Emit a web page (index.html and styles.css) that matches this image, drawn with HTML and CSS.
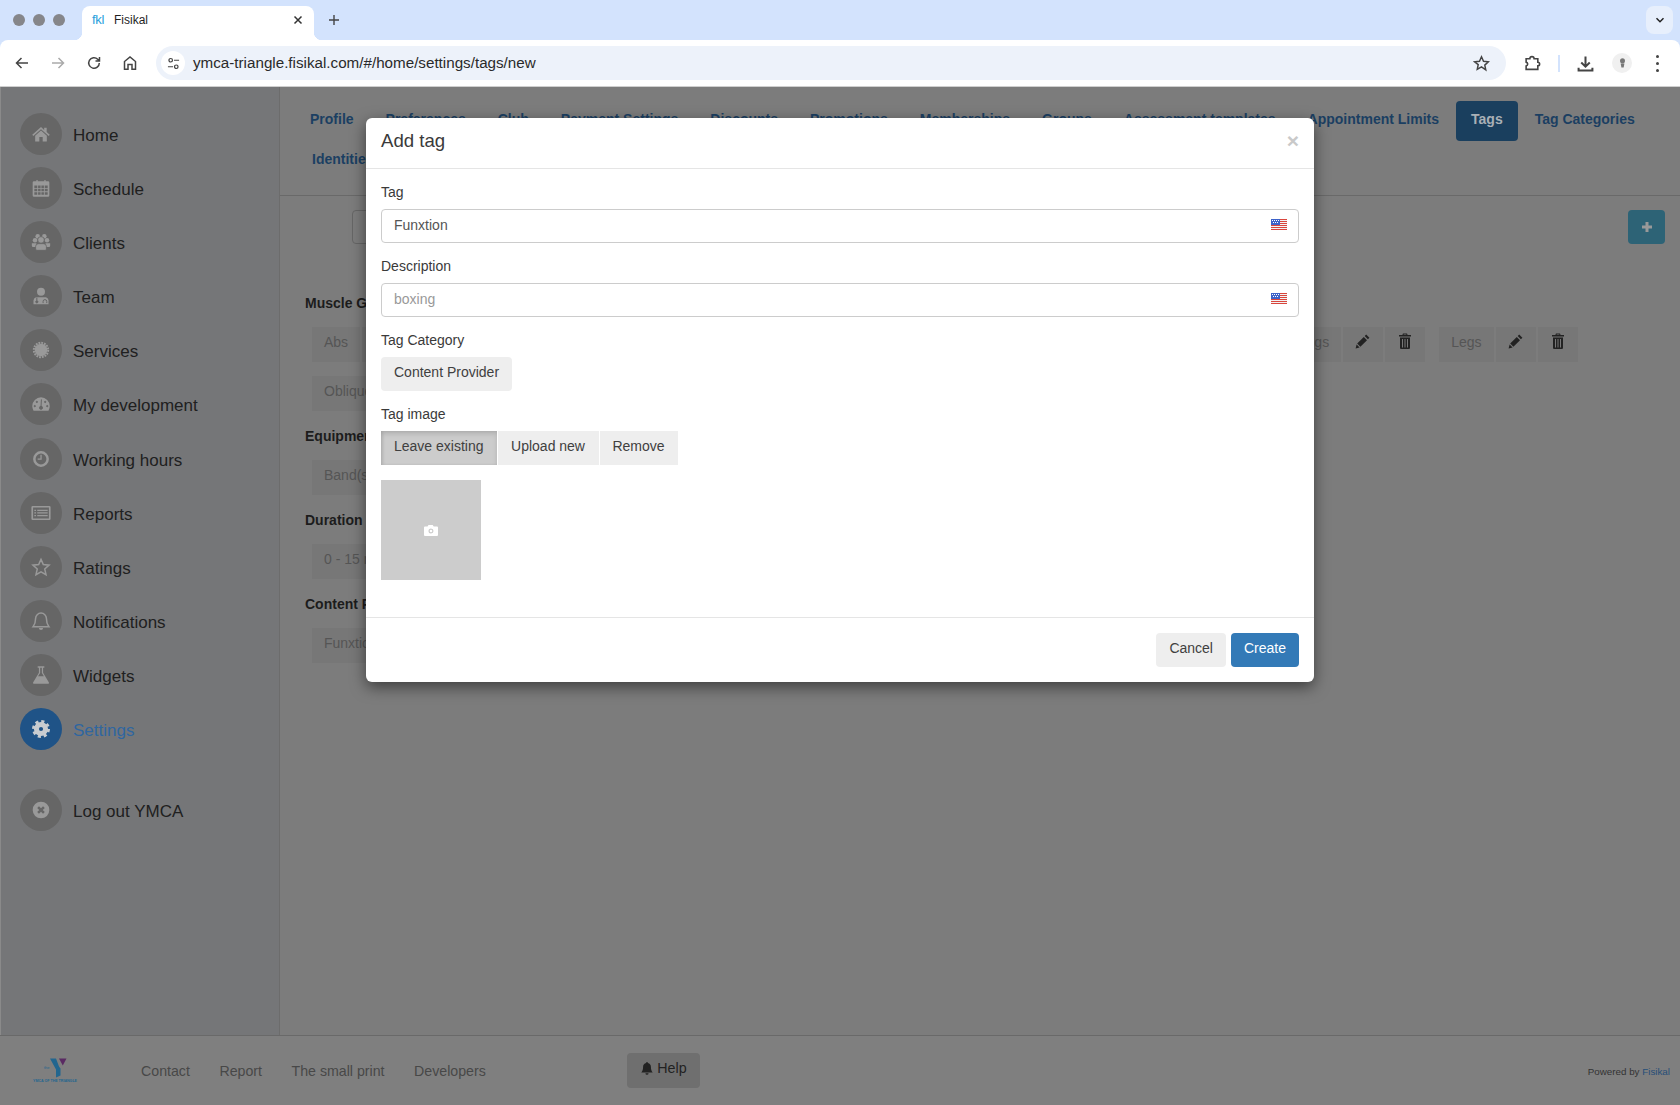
FILE: index.html
```html
<!DOCTYPE html>
<html lang="en">
<head>
<meta charset="utf-8">
<title>Fisikal</title>
<link rel="stylesheet" href="styles.css">
</head>
<body>
<svg class="defs" width="0" height="0" aria-hidden="true">
  <defs>
    <symbol id="pencil" viewBox="0 0 16 16"><path d="M11.2 1.6l3.200 3.200-1.500 1.500-3.200-3.200zM8.800 4l3.200 3.200-6.600 6.600-3.200-3.200zM1.600 11.400l3 3-4 1z"/></symbol>
    <symbol id="trash" viewBox="0 0 16 16"><path d="M6 .6h4l.6 1.400H14v1.600H2V2h3.400zM6.800 1.500L6.500 2h3l-.3-.5z"/><path d="M3 4.600h10v10.600l-.8.8H3.800l-.8-.8zM5 6v8.400h1V6zm2.500 0v8.400h1V6zM10 6v8.400h1V6z" fill-rule="evenodd"/></symbol>
    <symbol id="flag" viewBox="0 0 16 11">
      <rect width="16" height="11" fill="#f3f3f3"/>
      <path d="M0 0h16v1H0zM0 2h16v1H0zM0 4h16v1H0zM0 6h16v1H0zM0 8h16v1H0zM0 10h16v1H0z" fill="#d9463d"/>
      <rect width="9" height="6" fill="#3d62c9"/>
      <path d="M1 1h1v1H1zM3 1h1v1H3zM5 1h1v1H5zM7 1h1v1H7zM2 3h1v1H2zM4 3h1v1H4zM6 3h1v1H6z" fill="#fff"/>
    </symbol>
  </defs>
</svg>

<header class="browser">
  <div class="tabstrip">
    <div class="lights"><i></i><i></i><i></i></div>
    <div class="tab">
      <span class="favicon">fkl</span>
      <span class="tab-title">Fisikal</span>
      <svg class="tab-close" viewBox="0 0 10 10"><path d="M1.500 1.500l7 7M8.500 1.500l-7 7"/></svg>
    </div>
    <svg class="new-tab" viewBox="0 0 12 12"><path d="M6 1v10M1 6h10"/></svg>
    <div class="tab-search"><svg viewBox="0 0 10 10"><path d="M1.500 3.200L5 6.700l3.500-3.500"/></svg></div>
  </div>
  <div class="toolbar">
    <svg class="tool" viewBox="0 0 16 16"><path d="M14 8H2.500M7.500 3l-5 5 5 5"/></svg>
    <svg class="tool tool-off" viewBox="0 0 16 16"><path d="M2 8h11.500M8.500 3l5 5-5 5"/></svg>
    <svg class="tool" viewBox="0 0 16 16"><path d="M13.300 8a5.300 5.300 0 1 1-1.600-3.800L13.500 6M13.500 2v4h-4"/></svg>
    <svg class="tool" viewBox="0 0 16 16"><path d="M2.500 14.200V6.500L8 2l5.500 4.500v7.700H10V9.500H6v4.700z"/></svg>
    <div class="omnibox">
      <span class="site-info"><svg viewBox="0 0 14 14"><circle cx="4" cy="3.500" r="1.900"/><path d="M7.500 3.500H13M1 10.500h5.500"/><circle cx="10" cy="10.500" r="1.900"/></svg></span>
      <span class="url">ymca-triangle.fisikal.com/#/home/settings/tags/new</span>
      <svg class="star" viewBox="0 0 16 16"><path d="M8 1.700l1.900 4.200 4.600.5-3.400 3.100.9 4.500L8 11.200l-4 2.300.9-4.500L1.500 6.400l4.600-.5z"/></svg>
    </div>
    <svg class="tool tool-ext" viewBox="0 0 16 16"><path d="M2 3.500h3.500a2 2 0 0 1 4 0H13v3.300a1.700 1.700 0 0 1 0 3.400v3.300H2v-3.200a2 2 0 0 0 1.500-1.800A2 2 0 0 0 2 6.700z"/></svg>
    <span class="divider"></span>
    <svg class="tool tool-dl" viewBox="0 0 16 16"><path d="M8 1.500v9M4 7l4 4 4-4M1.500 12v2.500h13V12"/></svg>
    <span class="avatar"><svg viewBox="0 0 12 16"><ellipse cx="6" cy="5" rx="3.300" ry="3.500"/><path d="M3.500 8.500h5L7.500 14h-3z"/></svg></span>
    <span class="kebab"><i></i><i></i><i></i></span>
  </div>
</header>

<div class="app">
  <aside class="sidebar">
    <a class="side-item"><span class="bubble"><svg viewBox="0 0 24 24"><path d="M12 3.500L1.500 13l1.300 1.300L12 6.200l9.200 8.100 1.300-1.300-3.700-3.300V4.500h-3v2.800z"/><path d="M12 7.800l7 6.200v7h-5v-5.500h-4V21H5v-7z"/></svg></span><span>Home</span></a>
    <a class="side-item"><span class="bubble"><svg viewBox="0 0 24 24"><path fill-rule="evenodd" d="M3.500 4h3V2.500h1.500V4h8V2.500h1.500V4h3A1.500 1.500 0 0 1 22 5.500V21a1.500 1.500 0 0 1-1.500 1.500h-17A1.500 1.500 0 0 1 2 21V5.500A1.500 1.500 0 0 1 3.500 4zM4 9v3h3.500V9zm4.500 0v3h3V9zm4 0v3h3V9zm4 0v3H20V9zM4 13v3h3.500v-3zm4.500 0v3h3v-3zm4 0v3h3v-3zm4 0v3H20v-3zM4 17v3h3.500v-3zm4.500 0v3h3v-3zm4 0v3h3v-3zm4 0v3H20v-3z"/></svg></span><span>Schedule</span></a>
    <a class="side-item"><span class="bubble"><svg viewBox="0 0 24 24"><circle cx="4.800" cy="10" r="2.700"/><circle cx="19.200" cy="10" r="2.700"/><circle cx="8" cy="5" r="2.700"/><circle cx="16" cy="5" r="2.700"/><path d="M1 13.500h5.500L7 18H2.500Q1 18 1 16.500zM23 13.500h-5.500L17 18h4.500q1.500 0 1.500-1.500z"/><circle class="front" cx="12" cy="9.500" r="4"/><path class="front" d="M9 14h6q3.500 0 3.500 3.500v3Q18.500 22 17 22H7q-1.500 0-1.500-1.500v-3Q5.500 14 9 14z"/></svg></span><span>Clients</span></a>
    <a class="side-item"><span class="bubble"><svg viewBox="0 0 24 24"><circle cx="12" cy="7" r="4.800"/><path d="M6 13.500h12q3 .8 3 4v4.500H3v-4.500q0-3.200 3-4z"/><g class="knock"><circle cx="7" cy="19" r="1.300"/><path d="M7 17.500V14M14.500 20.500v-2a2.200 2.200 0 0 1 4.400 0v2"/></g></svg></span><span>Team</span></a>
    <a class="side-item"><span class="bubble"><svg viewBox="0 0 24 24"><circle cx="12" cy="12" r="7.500"/><circle class="teeth" cx="12" cy="12" r="8.600"/></svg></span><span>Services</span></a>
    <a class="side-item"><span class="bubble"><svg viewBox="0 0 24 24"><path d="M12 4a10.500 10.500 0 0 1 10.500 10.500q0 3-1.500 5.500H3q-1.500-2.500-1.500-5.500A10.500 10.500 0 0 1 12 4z"/><g class="knock"><path d="M12.500 6.500l-.5 9"/><circle cx="12" cy="16.500" r="1.800"/><circle cx="4.500" cy="14.500" r=".8"/><circle cx="19.500" cy="14.500" r=".8"/><circle cx="7" cy="9.500" r=".8"/><circle cx="17" cy="9.500" r=".8"/></g></svg></span><span>My development</span></a>
    <a class="side-item"><span class="bubble"><svg viewBox="0 0 24 24"><path fill-rule="evenodd" d="M12 2.500a9.500 9.500 0 1 1 0 19 9.500 9.500 0 0 1 0-19zm0 3a6.500 6.500 0 1 0 0 13 6.500 6.500 0 0 0 0-13z"/><path d="M11.300 7h1.500v6H8v-1.500h3.300z"/></svg></span><span>Working hours</span></a>
    <a class="side-item"><span class="bubble"><svg viewBox="0 0 24 24" class="wide"><path fill-rule="evenodd" d="M2 3.500h20a1.500 1.500 0 0 1 1.500 1.500v14a1.500 1.500 0 0 1-1.500 1.500H2A1.500 1.500 0 0 1 .5 19V5A1.500 1.500 0 0 1 2 3.500zM2.500 5.500v13h19v-13zM4 8h2v1.500H4zm3.500 0h12.500v1.500H7.500zM4 11.200h2v1.500H4zm3.500 0h12.500v1.500H7.500zM4 14.500h2V16H4zm3.500 0h12.500V16H7.500z"/></svg></span><span>Reports</span></a>
    <a class="side-item"><span class="bubble"><svg viewBox="0 0 24 24"><path class="line" d="M12 2.800l2.800 6.300 6.900.7-5.200 4.600 1.500 6.800-6-3.500-6 3.500 1.500-6.800-5.200-4.600 6.900-.7z"/></svg></span><span>Ratings</span></a>
    <a class="side-item"><span class="bubble"><svg viewBox="0 0 24 24"><path class="line" d="M12 2.500a6.500 6.500 0 0 1 6.500 6.500c0 5 1 7.500 3 10H2.500c2-2.500 3-5 3-10A6.500 6.500 0 0 1 12 2.500z"/><path d="M9.500 20.300h5a2.500 2.500 0 0 1-5 0z"/></svg></span><span>Notifications</span></a>
    <a class="side-item"><span class="bubble"><svg viewBox="0 0 24 24"><path d="M8 1.500h8v1.800h-1.500v6L21.500 21q.5 1.500-1 1.500h-17q-1.500 0-1-1.500l7-11.700v-6H8zM11 3.300v6.400L8.500 13.500h7L13 9.700V3.300z" fill-rule="evenodd"/></svg></span><span>Widgets</span></a>
    <a class="side-item side-active"><span class="bubble"><svg viewBox="0 0 24 24"><circle class="gear-ring" cx="12" cy="12" r="5.500"/><circle class="teeth-big" cx="12" cy="12" r="9"/></svg></span><span>Settings</span></a>
    <a class="side-item side-logout"><span class="bubble"><svg viewBox="0 0 24 24"><circle cx="12" cy="12" r="10"/><path class="knock-x" d="M8.500 8.500l7 7M15.500 8.500l-7 7"/></svg></span><span>Log out YMCA</span></a>
  </aside>

  <main class="content">
    <nav class="pills">
      <a class="pill">Profile</a>
      <a class="pill">Preferences</a>
      <a class="pill">Club</a>
      <a class="pill">Payment Settings</a>
      <a class="pill">Discounts</a>
      <a class="pill">Promotions</a>
      <a class="pill">Memberships</a>
      <a class="pill">Groups</a>
      <a class="pill">Assessment templates</a>
      <a class="pill">Appointment Limits</a>
      <a class="pill pill-active">Tags</a>
      <a class="pill">Tag Categories</a>
      <a class="pill">Identities</a>
    </nav>
    <section class="tags-page">
      <div class="tags-top">
        <div class="search-box"></div>
        <div class="add-btn"><svg viewBox="0 0 12 12"><path d="M6 1v10M1 6h10"/></svg></div>
      </div>

      <h4 class="group-title">Muscle Groups</h4>
      <div class="tag-row">
        <div class="tag"><span class="tag-name">Abs</span><span class="tag-act"><svg><use href="#pencil"/></svg></span><span class="tag-act"><svg><use href="#trash"/></svg></span></div>
        <div class="tag"><span class="tag-name">Back</span><span class="tag-act"><svg><use href="#pencil"/></svg></span><span class="tag-act"><svg><use href="#trash"/></svg></span></div>
        <div class="tag"><span class="tag-name">Biceps</span><span class="tag-act"><svg><use href="#pencil"/></svg></span><span class="tag-act"><svg><use href="#trash"/></svg></span></div>
        <div class="tag"><span class="tag-name">Chest</span><span class="tag-act"><svg><use href="#pencil"/></svg></span><span class="tag-act"><svg><use href="#trash"/></svg></span></div>
        <div class="tag"><span class="tag-name">Hips</span><span class="tag-act"><svg><use href="#pencil"/></svg></span><span class="tag-act"><svg><use href="#trash"/></svg></span></div>
        <div class="tag"><span class="tag-name">Glutes</span><span class="tag-act"><svg><use href="#pencil"/></svg></span><span class="tag-act"><svg><use href="#trash"/></svg></span></div>
        <div class="tag"><span class="tag-name">Hamstrings</span><span class="tag-act"><svg><use href="#pencil"/></svg></span><span class="tag-act"><svg><use href="#trash"/></svg></span></div>
        <div class="tag"><span class="tag-name">Legs</span><span class="tag-act"><svg><use href="#pencil"/></svg></span><span class="tag-act"><svg><use href="#trash"/></svg></span></div>
        <div class="tag"><span class="tag-name">Obliques</span><span class="tag-act"><svg><use href="#pencil"/></svg></span><span class="tag-act"><svg><use href="#trash"/></svg></span></div>
      </div>

      <h4 class="group-title">Equipment</h4>
      <div class="tag-row">
        <div class="tag"><span class="tag-name">Band(s)</span><span class="tag-act"><svg><use href="#pencil"/></svg></span><span class="tag-act"><svg><use href="#trash"/></svg></span></div>
      </div>

      <h4 class="group-title">Duration</h4>
      <div class="tag-row">
        <div class="tag"><span class="tag-name">0 - 15 min</span><span class="tag-act"><svg><use href="#pencil"/></svg></span><span class="tag-act"><svg><use href="#trash"/></svg></span></div>
      </div>

      <h4 class="group-title">Content Provider</h4>
      <div class="tag-row">
        <div class="tag"><span class="tag-name">Funxtion</span><span class="tag-act"><svg><use href="#pencil"/></svg></span><span class="tag-act"><svg><use href="#trash"/></svg></span></div>
      </div>
    </section>
  </main>
</div>

<footer class="foot">
  <div class="logo">
    <svg viewBox="0 0 44 20">
      <path class="logo-y" d="M17 .5h6l3 8 1.500 2v7l-4.500 2v-8z"/>
      <path class="logo-tri" d="M26 .5h7.500l-3.700 7z"/>
    </svg>
    <span class="logo-the">the</span>
    <span class="logo-text">YMCA OF THE TRIANGLE</span>
  </div>
  <a class="foot-link">Contact</a>
  <a class="foot-link">Report</a>
  <a class="foot-link">The small print</a>
  <a class="foot-link">Developers</a>
  <div class="help-btn"><svg viewBox="0 0 16 16"><path d="M8 1a1 1 0 0 1 1 1v.4c2.300.5 3.500 2.300 3.500 4.600 0 3 .8 4.500 2 6H1.500c1.200-1.500 2-3 2-6 0-2.300 1.200-4.100 3.500-4.600V2a1 1 0 0 1 1-1zM6.200 14h3.600a1.800 1.800 0 0 1-3.600 0z"/></svg>Help</div>
  <div class="powered">Powered by <a>Fisikal</a></div>
</footer>

<div class="modal" role="dialog">
  <div class="modal-head">
    <h3 class="modal-title">Add tag</h3>
    <span class="modal-x">×</span>
  </div>
  <form class="modal-body">
    <div class="field">
      <label class="field-label">Tag</label>
      <div class="input"><span class="input-value">Funxtion</span><svg class="flag"><use href="#flag"/></svg></div>
    </div>
    <div class="field">
      <label class="field-label">Description</label>
      <div class="input"><span class="input-holder">boxing</span><svg class="flag"><use href="#flag"/></svg></div>
    </div>
    <div class="field">
      <label class="field-label">Tag Category</label>
      <div class="btn btn-round">Content Provider</div>
    </div>
    <div class="field">
      <label class="field-label">Tag image</label>
      <div class="btn-group">
        <div class="btn btn-active">Leave existing</div>
        <div class="btn btn-upload">Upload new</div>
        <div class="btn btn-remove">Remove</div>
      </div>
    </div>
    <div class="image-box">
      <svg viewBox="0 0 14 12"><path fill-rule="evenodd" d="M4.500 1h4.200l1 1.500H13a1 1 0 0 1 1 1V11a1 1 0 0 1-1 1H1a1 1 0 0 1-1-1V3.500a1 1 0 0 1 1-1h2.500zM7 4.500a2.500 2.500 0 1 0 0 5 2.500 2.500 0 0 0 0-5zm0 1.200a1.300 1.300 0 1 1 0 2.600 1.300 1.300 0 0 1 0-2.600z"/></svg>
    </div>
  </form>
  <div class="modal-foot">
    <div class="btn btn-round">Cancel</div>
    <div class="btn btn-round btn-primary">Create</div>
  </div>
</div>
</body>
</html>
```
FILE: styles.css
```css
* { box-sizing: border-box; }
html, body { margin: 0; height: 100%; }
body {
  display: flex;
  flex-direction: column;
  height: 1105px;
  overflow: hidden;
  background: #7c7c7c;
  font-family: "Liberation Sans", Arial, sans-serif;
  font-size: 14px;
  line-height: 20px;
  color: #333;
}
.defs { position: absolute; }

/* browser chrome */
.browser { flex: none; height: 87px; background: #d3e3fd; border-bottom: 1px solid #cfcfcf; }
.tabstrip { height: 40px; background: #d3e3fd; display: flex; align-items: flex-end; position: relative; }
.lights { display: flex; gap: 8px; width: 82px; padding: 0 0 14px 13px; }
.lights i { width: 12px; height: 12px; border-radius: 50%; background: #85868a; }
.tab {
  position: relative; width: 232px; height: 34px; background: #fff; border-radius: 8px 8px 0 0;
  display: flex; align-items: center; padding: 0 10px 6px; font-size: 12px; color: #1f1f1f;
}
.tab::before, .tab::after { content: ""; position: absolute; bottom: 0; width: 8px; height: 8px; }
.tab::before { left: -8px; background: radial-gradient(circle at 0 0, transparent 8px, #fff 8.5px); }
.tab::after { right: -8px; background: radial-gradient(circle at 100% 0, transparent 8px, #fff 8.5px); }
.favicon { width: 22px; font-weight: 400; color: #2aa0dc; font-size: 13px; letter-spacing: -0.3px; }
.tab-title { flex: 1; }
.tab-close { width: 10px; height: 10px; margin-right: 1px; fill: none; stroke: #333; stroke-width: 1.5; }
.new-tab { width: 12px; height: 12px; margin: 0 0 14px 14px; fill: none; stroke: #444; stroke-width: 1.4; }
.tab-search {
  margin: 0 7px 6px auto; width: 27px; height: 28px; border-radius: 8px; background: #e7effc;
  display: flex; align-items: center; justify-content: center;
}
.tab-search svg { width: 10px; height: 10px; fill: none; stroke: #222; stroke-width: 1.5; }

.toolbar { height: 46px; display: flex; align-items: center; padding: 0 0 0 14px; background: #fff; border-radius: 8px 8px 0 0; }
.tool { width: 16px; height: 16px; margin-right: 20px; fill: none; stroke: #444; stroke-width: 1.5; flex: none; }
.tool-off { stroke: #aaa; }
.omnibox {
  width: 1350px; height: 34px; margin-left: -2px; border-radius: 17px; background: #edf2fa;
  display: flex; align-items: center; padding: 0 16px 0 5px; flex: none;
}
.site-info { width: 24px; height: 24px; border-radius: 50%; background: #fff; display: flex; align-items: center; justify-content: center; margin-right: 8px; }
.site-info svg { width: 13px; height: 13px; fill: none; stroke: #444; stroke-width: 1.3; }
.url { flex: 1; font-size: 15.2px; color: #2a2a2a; white-space: nowrap; }
.star { width: 17px; height: 17px; fill: none; stroke: #444; stroke-width: 1.4; }
.tool-ext { margin: 0 0 0 18px; width: 17px; height: 17px; }
.divider { width: 2px; height: 17px; background: #d3e3fd; margin: 0 0 0 17px; }
.tool-dl { margin: 0 0 0 17px; width: 17px; height: 17px; stroke-width: 1.9; }
.avatar { width: 20px; height: 20px; border-radius: 50%; background: #f0f0f0; margin-left: 18px; display: flex; align-items: center; justify-content: center; }
.avatar svg { width: 9px; height: 14px; fill: #777; }
.kebab { display: flex; flex-direction: column; gap: 4px; margin-left: 24px; }
.kebab i { width: 3px; height: 3px; border-radius: 50%; background: #444; }

/* app frame */
.app { flex: 1; display: flex; min-height: 0; }
.sidebar {
  flex: none; width: 280px; background: #757678; padding-top: 26px;
  border-left: 1px solid #8a8a8a; border-right: 1px solid #6c6c6c;
}
.side-item { display: flex; align-items: center; gap: 11px; height: 42px; margin: 0 0 12.1px 19px; font-size: 17px; color: #202020; }
.side-item > span:last-child { padding-top: 4px; }
.bubble { flex: none; width: 42px; height: 42px; border-radius: 50%; background: #666; display: flex; align-items: center; justify-content: center; }
.bubble svg { width: 20px; height: 20px; fill: #999; }
.bubble svg.wide { width: 22px; }
.bubble .line { fill: none; stroke: #999; stroke-width: 1.8; }
.bubble .front { stroke: #666; stroke-width: 1; }
.knock { fill: #666; stroke: #666; stroke-width: 1.2; }
.knock path { fill: none; }
.knock-x { fill: none; stroke: #666; stroke-width: 3; }
.teeth { fill: none; stroke: #999; stroke-width: 2.4; stroke-dasharray: 2.2 1.18; }
.side-active { color: #2f66a0; }
.side-active .bubble { background: #1f5387; }
.side-active svg { fill: none; }
.gear-ring { fill: none; stroke: #c8ccd0; stroke-width: 6; }
.teeth-big { fill: none; stroke: #c8ccd0; stroke-width: 3.6; stroke-dasharray: 3.7 3.37; }
.side-logout { margin-top: 39px; }

/* settings content */
.content { flex: 1; min-width: 0; }
.pills { display: flex; flex-wrap: wrap; padding: 14px 15px; border-bottom: 1px solid #696969; height: 109px; align-content: flex-start; }
.pill { height: 40px; padding: 8px 15px; font-weight: 700; color: #1b3f62; border-radius: 4px; white-space: nowrap; }
.pill + .pill { margin-left: 2px; }
.pill-active { background: #1a3f5e; color: #a9b0b6; }
.tags-page { padding: 14px 15px 0 25px; }
.tags-top { display: flex; justify-content: space-between; height: 34px; margin-bottom: 49px; }
.search-box { width: 300px; height: 34px; margin-left: 47px; border: 1px solid #666; border-radius: 4px; background: #7c7c7c; }
.add-btn { width: 37px; height: 34px; background: #2d6376; border-radius: 4px; display: flex; align-items: center; justify-content: center; }
.add-btn svg { width: 12px; height: 12px; fill: none; stroke: #999; stroke-width: 3; }
.group-title { margin: 1px 0 14px; font-size: 14px; line-height: 20px; font-weight: 700; color: #1c1c1c; }
.tag-row { display: flex; flex-wrap: wrap; column-gap: 14px; padding-left: 7px; }
.tag { display: flex; gap: 2px; height: 35px; margin-bottom: 14px; }
.tag-name { background: #777; color: #555; padding: 5px 12px; }
.tag-act { width: 40px; background: #777; display: flex; align-items: center; justify-content: center; padding-bottom: 7px; }
.tag-act svg { width: 16px; height: 16px; fill: #222; }

/* footer */
.foot { flex: none; height: 70px; display: flex; align-items: center; border-top: 1px solid #696969; background: #7f7f7f; padding-left: 33px; position: relative; }
.logo { width: 108px; height: 30px; position: relative; }
.logo svg { position: absolute; left: 0; top: 2px; width: 44px; height: 20px; }
.logo-y { fill: #22668f; }
.logo-tri { fill: #5a2a63; }
.logo-the { position: absolute; left: 11px; top: 9px; font-size: 4px; line-height: 5px; color: #22668f; }
.logo-text { position: absolute; left: 0; top: 23px; font-size: 3.6px; line-height: 5px; color: #22668f; white-space: nowrap; font-weight: 700; }
.foot-link { color: #484848; font-size: 14.2px; margin-right: 29.5px; }
.help-btn {
  position: absolute; left: 627px; top: 17px; width: 73px; height: 35px; border-radius: 4px; background: #6f6f6f;
  color: #222; font-size: 14.3px; display: flex; align-items: center; justify-content: center; gap: 3px; padding-bottom: 5px;
}
.help-btn svg { width: 14px; height: 14px; fill: #222; }
.powered { margin: 2px 10px 0 auto; font-size: 9.8px; color: #333; }
.powered a { color: #264e78; }

/* dialog */
.modal {
  position: absolute; left: 366px; top: 118px; width: 948px; height: 564px;
  background: #fff; border-radius: 6px; box-shadow: 0 5px 15px rgba(0,0,0,.5);
  display: flex; flex-direction: column;
}
.modal-head { height: 51px; padding: 0 15px; border-bottom: 1px solid #e5e5e5; display: flex; align-items: center; justify-content: space-between; }
.modal-title { margin: 0; font-size: 18.6px; font-weight: 400; line-height: 20px; color: #3a3a3a; padding-bottom: 5px; }
.modal-x { font-size: 21px; font-weight: 700; color: #c9c9c9; line-height: 20px; padding-bottom: 4px; }
.modal-body { flex: 1; padding: 15px 15px 0; }
.field { margin-bottom: 15px; }
.field-label { display: block; height: 20px; margin-bottom: 5px; color: #3a3a3a; line-height: 16px; }
.input {
  height: 34px; border: 1px solid #ccc; border-radius: 4px; padding: 5px 11px 8px 12px;
  display: flex; align-items: center; justify-content: space-between; color: #555;
}
.input-holder { color: #999; }
.flag { width: 16px; height: 11px; }
.btn { display: inline-block; height: 34px; padding: 5px 13px 7px; background: #eee; color: #404040; white-space: nowrap; }
.btn-round { border-radius: 4px; }
.btn-group { display: flex; gap: 1px; }
.btn-upload { width: 101px; text-align: center; padding-left: 0; padding-right: 0; }
.btn-remove { width: 78px; text-align: center; padding-left: 0; padding-right: 0; }
.btn-active { background: #ccc; box-shadow: inset 0 3px 5px rgba(0,0,0,.125), inset 2px 0 3px rgba(0,0,0,.08); }
.btn-primary { background: #337ab7; color: #fff; }
.image-box { width: 100px; height: 100px; background: #ccc; display: flex; align-items: center; justify-content: center; }
.image-box svg { width: 14px; height: 12px; fill: #fff; }
.modal-foot { height: 65px; padding: 15px; border-top: 1px solid #e5e5e5; display: flex; justify-content: flex-end; gap: 5px; }
```
